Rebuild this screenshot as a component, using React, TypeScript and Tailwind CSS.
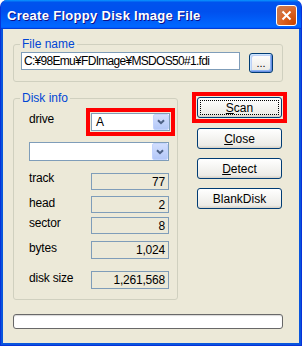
import type { ReactNode } from "react";

const FONT = "font-['Liberation_Sans',Arial,sans-serif]";

function Chevron() {
  return (
    <svg width="8" height="6" viewBox="0 0 8 6" fill="none">
      <path d="M1 1.2L4 4.2L7 1.2" stroke="#4D6185" strokeWidth="2" />
    </svg>
  );
}

function Combo({ value, w, h }: { value?: string; w: string; h: string }) {
  return (
    <div className={`${w} ${h} flex border border-[#7F9DB9] bg-white`}>
      <span className="flex-1 pl-[4px] flex items-center text-[12px] leading-none">{value}</span>
      <div className="w-[16px] flex items-center justify-center rounded-[2px] border border-[#C3D3FD] bg-[linear-gradient(180deg,#D2DEFD,#B4C8F8)]">
        <Chevron />
      </div>
    </div>
  );
}

function Field({ label, value, top, labelShift, h }: { label: string; value: string; top: string; labelShift: string; h: string }) {
  return (
    <div className={`flex items-start ${top}`}>
      <span className={`w-[62px] text-[12px] leading-[14px] tracking-[-0.2px] ${labelShift}`}>{label}</span>
      <div className={`w-[78px] ${h} border border-[#7F9DB9] flex items-center justify-end pr-[3px] text-[12px] leading-none tracking-[-0.2px]`}>
        {value}
      </div>
    </div>
  );
}

function XpButton({ children, focus }: { children: ReactNode; focus?: boolean }) {
  return (
    <div className="w-[85px] h-[21px] rounded-[3px] border border-[#003C74] bg-[linear-gradient(180deg,#fff,#ECEBE6_86%,#D6D0C5)] p-[2px] text-[12px] leading-none">
      <div className={`w-full h-full flex items-center justify-center border ${focus ? "border-dotted border-black" : "border-transparent"}`}>
        {children}
      </div>
    </div>
  );
}

export default function App() {
  return (
    <div className={`w-[302px] h-[346px] flex flex-col rounded-t-[7px] overflow-hidden bg-[#0855DD] border-x border-b border-[#0831D9] text-black ${FONT}`}>
      {/* Title bar */}
      <div className="h-[29px] shrink-0 flex items-center justify-between pl-[6px] pr-[4px] pt-[2px] bg-[linear-gradient(180deg,#0997ff,#0053ee_8%,#0050ee_40%,#06f_88%,#06f_93%,#005bff_95%,#003dd7_96%,#003dd7)]">
        <span className="text-[13px] font-bold tracking-[0.3px] text-white [text-shadow:1px_1px_#0F1089]">
          Create Floppy Disk Image File
        </span>
        <div className="w-[21px] h-[21px] rounded-[3px] border border-white bg-[radial-gradient(circle_at_90%_90%,#cc4600_0,#dc6527_55%,#cd7546_70%,#cd7546_90%,#fff_100%)] flex items-center justify-center">
          <svg width="11" height="11" viewBox="0 0 11 11">
            <path d="M1.5 1.5L9.5 9.5M9.5 1.5L1.5 9.5" stroke="white" strokeWidth="2" />
          </svg>
        </div>
      </div>

      {/* Client area */}
      <div className="flex-1 mx-[2px] mb-[2px] bg-[#ECE9D8] pl-[10px]">
        <fieldset className="mt-[8px] w-[270px] border border-[#D0D0BF] rounded-[3px] px-[7px] pt-[1px] pb-[8px]">
          <legend className="-ml-[1px] px-[2px] text-[12px] leading-[14px] text-[#0046D5]">File name</legend>
          <div className="flex items-start">
            <div className="w-[219px] h-[18px] border border-[#7F9DB9] bg-white pl-[2px] flex items-center text-[12px] leading-none tracking-[-0.7px]">
              C:¥98Emu¥FDImage¥MSDOS50#1.fdi
            </div>
            <div className="ml-[9px] mt-[1px] w-[24px] h-[20px] rounded-[3px] border border-[#003C74] bg-[linear-gradient(180deg,#fff,#ECEBE6_86%,#D6D0C5)] shadow-[inset_-1px_-1px_#6A8EE3,inset_1px_1px_#CEE7FF,inset_-2px_-2px_#8CB4F2,inset_2px_2px_#BCCFF5] flex items-end justify-center pb-[3px] text-[11px] leading-none">
              ...
            </div>
          </div>
        </fieldset>

        <div className="mt-[9px] flex items-start">
          <fieldset className="w-[165px] border border-[#D0D0BF] rounded-[3px] pl-[15px] pr-[1px] pt-[3px] pb-[10px]">
            <legend className="-ml-[9px] px-[2px] text-[12px] leading-[14px] text-[#0046D5]">Disk info</legend>
            <div className="flex items-start">
              <span className="w-[57px] mt-[4px] text-[12px] leading-[14px] tracking-[-0.2px]">drive</span>
              <div className="border-4 border-[#FF0000] p-[1px]">
                <Combo value="A" w="w-[79px]" h="h-[18px]" />
              </div>
            </div>
            <div className="mt-[6px]">
              <Combo w="w-[140px]" h="h-[19px]" />
            </div>
            <Field label="track" value="77" top="mt-[12px]" labelShift="-mt-[2px]" h="h-[17px]" />
            <Field label="head" value="2" top="mt-[6px]" labelShift="mt-0" h="h-[17px]" />
            <Field label="sector" value="8" top="mt-[4px]" labelShift="-mt-[1px]" h="h-[17px]" />
            <Field label="bytes" value="1,024" top="mt-[7px]" labelShift="mt-0" h="h-[18px]" />
            <Field label="disk size" value="1,261,568" top="mt-[12px]" labelShift="mt-0" h="h-[18px]" />
          </fieldset>

          <div className="ml-[14px] mt-[1px] w-[95px] flex flex-col items-center">
            <div className="border-4 border-[#FF0000] p-[1px]">
              <XpButton focus>
                <span><u>S</u>can</span>
              </XpButton>
            </div>
            <div className="mt-[5px]">
              <XpButton>
                <span><u>C</u>lose</span>
              </XpButton>
            </div>
            <div className="mt-[9px]">
              <XpButton>
                <span><u>D</u>etect</span>
              </XpButton>
            </div>
            <div className="mt-[9px]">
              <XpButton>
                <span>BlankDisk</span>
              </XpButton>
            </div>
          </div>
        </div>

        <div className="mt-[14px] w-[270px] h-[15px] rounded-[3px] border border-[#686868] bg-white shadow-[inset_0_1px_1px_#D8D8D8]" />
      </div>
    </div>
  );
}
